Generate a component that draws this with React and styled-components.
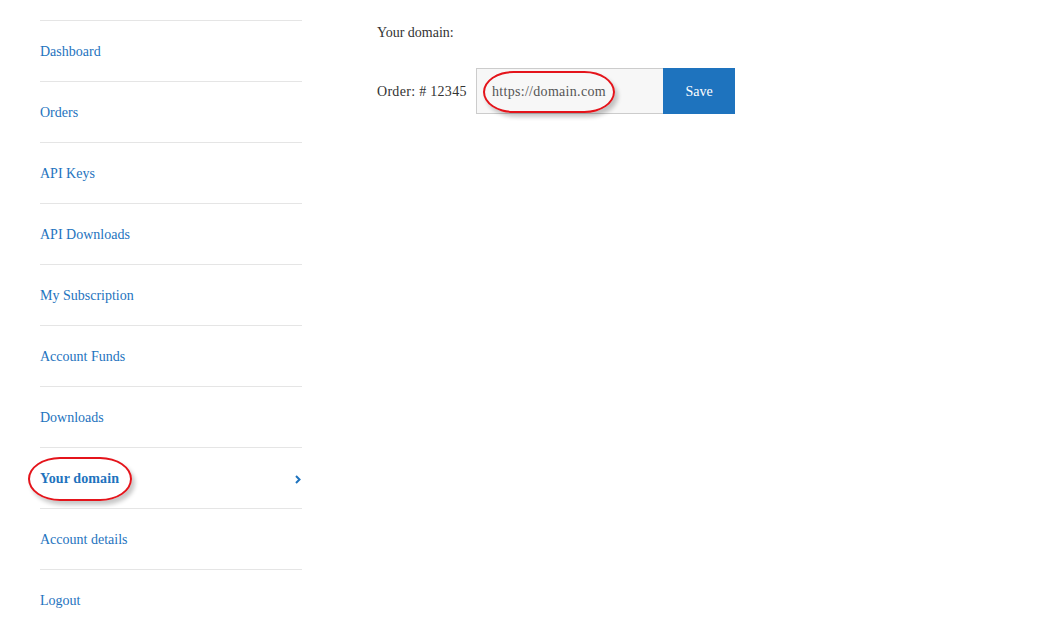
import React from 'react';
import styled, { createGlobalStyle } from 'styled-components';

const GlobalStyle = createGlobalStyle`
  html, body {
    margin: 0;
    padding: 0;
    background: #ffffff;
    font-family: "Liberation Serif", "Times New Roman", serif;
    font-size: 14px;
    color: #333333;
  }
`;

const Page = styled.div`
  display: flex;
  align-items: flex-start;
  width: 1050px;
  height: 630px;
  overflow: hidden;
`;

const Sidebar = styled.nav`
  width: 262px;
  margin-left: 40px;
  padding-top: 20px;
`;

const NavList = styled.ul`
  list-style: none;
  margin: 0;
  padding: 0;
`;

const NavItem = styled.li`
  position: relative;
  display: flex;
  align-items: center;
  justify-content: space-between;
  height: 61px;
  box-sizing: border-box;
  padding-top: 2px;
  border-top: 1px solid #e5e5e5;
`;

const NavLink = styled.a`
  color: #1e73be;
  text-decoration: none;
  font-weight: ${({ $active }) => ($active ? 700 : 400)};
  letter-spacing: ${({ $active }) => ($active ? '0.1px' : '0')};
  cursor: pointer;
`;

const Chevron = styled.svg`
  width: 6px;
  height: 9px;
  margin-right: 1px;
`;

const Marker = styled.span`
  position: absolute;
  left: ${({ $left }) => $left}px;
  top: ${({ $top }) => $top}px;
  width: ${({ $w }) => $w}px;
  height: ${({ $h }) => $h}px;
  border: 2px solid #e4141b;
  border-radius: 32px / 22px;
  box-sizing: border-box;
  box-shadow: 3px 4px 4px rgba(0, 0, 0, 0.22);
  pointer-events: none;
`;

const Main = styled.main`
  margin-left: 75px;
  padding-top: 23px;
`;

const Heading = styled.p`
  margin: 0;
  line-height: 20px;
`;

const FormRow = styled.div`
  display: flex;
  align-items: center;
  margin-top: 25px;
`;

const Label = styled.span`
  width: 99px;
  padding-top: 2px;
  letter-spacing: 0.3px;
`;

const InputWrap = styled.div`
  position: relative;
  display: flex;
`;

const DomainInput = styled.input`
  width: 187px;
  height: 46px;
  box-sizing: border-box;
  border: 1px solid #cccccc;
  border-right: none;
  background: #f7f7f7;
  padding: 2px 15px 0;
  font-family: inherit;
  font-size: 14px;
  letter-spacing: 0.3px;
  color: #555555;
  outline: none;
`;

const SaveButton = styled.button`
  width: 72px;
  height: 46px;
  border: none;
  background: #1e73be;
  color: #ffffff;
  font-family: inherit;
  font-size: 14px;
  padding-top: 2px;
  cursor: pointer;
`;

const items = [
  'Dashboard',
  'Orders',
  'API Keys',
  'API Downloads',
  'My Subscription',
  'Account Funds',
  'Downloads',
  'Your domain',
  'Account details',
  'Logout',
];

export default function App() {
  return (
    <>
      <GlobalStyle />
      <Page>
        <Sidebar>
          <NavList>
            {items.map((label) => {
              const active = label === 'Your domain';
              return (
                <NavItem key={label}>
                  <NavLink $active={active}>{label}</NavLink>
                  {active && (
                    <>
                      <Chevron viewBox="0 0 6 9">
                        <polyline
                          points="1,1 4.5,4.5 1,8"
                          fill="none"
                          stroke="#1e73be"
                          strokeWidth="2"
                        />
                      </Chevron>
                      <Marker $left={-12} $top={9} $w={104} $h={44} />
                    </>
                  )}
                </NavItem>
              );
            })}
          </NavList>
        </Sidebar>
        <Main>
          <Heading>Your domain:</Heading>
          <FormRow>
            <Label>Order: # 12345</Label>
            <InputWrap>
              <DomainInput defaultValue="https://domain.com" />
              <SaveButton>Save</SaveButton>
              <Marker $left={7} $top={3} $w={132} $h={42} />
            </InputWrap>
          </FormRow>
        </Main>
      </Page>
    </>
  );
}
